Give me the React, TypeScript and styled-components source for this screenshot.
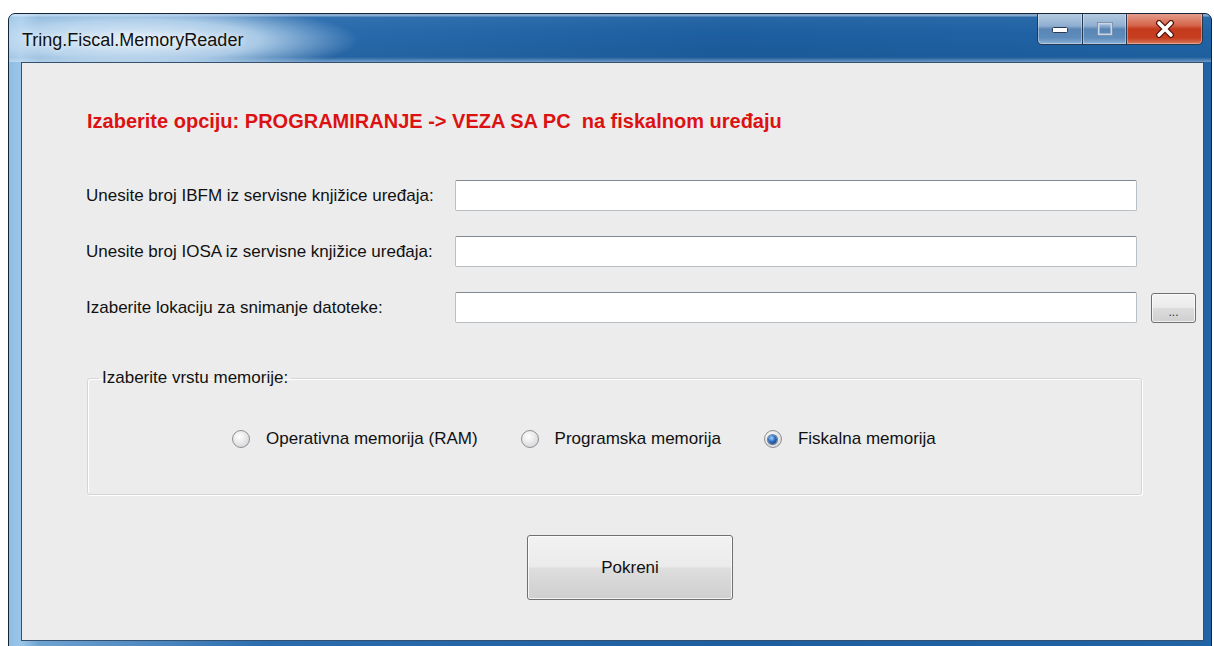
import styled, { createGlobalStyle } from 'styled-components';

const GlobalStyle = createGlobalStyle`
  html, body {
    margin: 0;
    padding: 0;
    background: #ffffff;
    overflow: hidden;
  }
  body {
    font-family: "Liberation Sans", Arial, sans-serif;
  }
`;

const Screen = styled.div`
  width: 1214px;
  height: 646px;
  padding: 13px 2px 0 8px;
  box-sizing: border-box;
  overflow: hidden;
`;

const Window = styled.div`
  height: 634px;
  border: 1px solid #16243a;
  border-radius: 7px 7px 0 0;
  background: linear-gradient(
    90deg,
    #8ebde3 0,
    #9cc6e8 12px,
    #6ea2d0 30px,
    #2a6cae 260px,
    #1d5ea0 60%,
    #2064a6 100%
  );
  display: flex;
  flex-direction: column;
  overflow: hidden;
`;

const TitleBar = styled.div`
  height: 48px;
  flex-shrink: 0;
  display: flex;
  justify-content: space-between;
  align-items: flex-start;
  background:
    radial-gradient(ellipse 220px 36px at 130px 26px, rgba(232, 242, 251, 0.97), rgba(200, 224, 244, 0.8) 55%, rgba(150, 190, 228, 0) 100%),
    linear-gradient(180deg, rgba(255, 255, 255, 0.45) 0, rgba(255, 255, 255, 0.45) 2px, rgba(255, 255, 255, 0.05) 3px, rgba(255, 255, 255, 0) 40%, rgba(0, 0, 0, 0.05) 90%, rgba(255, 255, 255, 0.35) 100%);
`;

const Title = styled.div`
  margin: 15px 0 0 13px;
  font-size: 18px;
  line-height: 22px;
  color: #111;
  text-shadow: 0 0 6px rgba(255, 255, 255, 0.9);
`;

const Caption = styled.div`
  display: flex;
  margin-right: 8px;
  margin-top: -1px;
`;

const CaptionButton = styled.div<{ $w: number; $kind: 'min' | 'max' | 'close' }>`
  width: ${(p) => p.$w}px;
  height: 32px;
  box-sizing: border-box;
  border: 1px solid #27384f;
  border-top: none;
  border-left-width: ${(p) => (p.$kind === 'min' ? 1 : 0)}px;
  border-radius: ${(p) =>
    p.$kind === 'min' ? '0 0 0 5px' : p.$kind === 'close' ? '0 0 5px 0' : '0'};
  display: flex;
  align-items: center;
  justify-content: center;
  box-shadow: inset 0 0 0 1px rgba(255, 255, 255, 0.35);
  background: ${(p) =>
    p.$kind === 'close'
      ? 'linear-gradient(180deg, #e6a190 0%, #d4644a 40%, #c33a1c 52%, #c63d20 80%, #d8775a 100%)'
      : 'linear-gradient(180deg, #b8cde2 0%, #8eaed0 42%, #5a86b4 52%, #5e8cbb 80%, #8db1d6 100%)'};
`;

const Client = styled.div`
  flex: 1;
  margin: 0 7px 7px 12px;
  border: 1px solid #33506f;
  background: #ececec;
  display: flex;
  flex-direction: column;
  align-items: flex-start;
`;

const Notice = styled.div`
  margin: 47px 0 0 65px;
  font-size: 20px;
  line-height: 22px;
  font-weight: bold;
  color: #dc1212;
  white-space: pre;
`;

const Form = styled.div`
  margin: 48px 0 0 64px;
  display: grid;
  grid-template-columns: 355px 682px 45px;
  column-gap: 14px;
  row-gap: 25px;
  align-items: center;
`;

const Label = styled.div`
  font-size: 17px;
  line-height: 20px;
  color: #111;
`;

const TextBox = styled.div`
  height: 31px;
  box-sizing: border-box;
  background: #ffffff;
  border: 1px solid #b7bec4;
  border-top-color: #7f8a91;
  border-radius: 2px;
`;

const SmallButton = styled.div`
  height: 30px;
  box-sizing: border-box;
  border: 1px solid #6f6f6f;
  border-radius: 3px;
  background: linear-gradient(180deg, #f3f3f3 0%, #ebebeb 48%, #dcdcdc 52%, #cfcfcf 100%);
  box-shadow: inset 0 0 0 1px rgba(255, 255, 255, 0.7);
  display: flex;
  align-items: flex-end;
  justify-content: center;
  padding-bottom: 4px;
  font-size: 12px;
  line-height: 12px;
  color: #333;
`;

const Group = styled.fieldset`
  margin: 44px 0 0 65px;
  width: 1055px;
  height: 128px;
  box-sizing: border-box;
  border: 1px solid #d3d6d9;
  border-radius: 3px;
  box-shadow: inset 1px 1px 0 #ffffff, 1px 1px 0 #ffffff;
  padding: 39px 0 0 0;
`;

const Legend = styled.legend`
  margin-left: 11px;
  padding: 0 3px;
  font-size: 17px;
  line-height: 22px;
  color: #111;
`;

const RadioRow = styled.div`
  margin-left: 144px;
  display: flex;
  align-items: center;
  gap: 43px;
`;

const RadioItem = styled.label`
  display: flex;
  align-items: center;
  gap: 16px;
  font-size: 17px;
  line-height: 22px;
  color: #111;
`;

const RadioMark = styled.span<{ $checked?: boolean }>`
  width: 18px;
  height: 18px;
  box-sizing: border-box;
  border-radius: 50%;
  border: 1px solid #8d9196;
  background: radial-gradient(circle at 40% 35%, #ffffff 0%, #e9e9e9 45%, #c9cbcd 100%);
  display: flex;
  align-items: center;
  justify-content: center;

  &::after {
    content: '';
    display: ${(p) => (p.$checked ? 'block' : 'none')};
    width: 9px;
    height: 9px;
    border-radius: 50%;
    background: radial-gradient(circle at 40% 35%, #a8d4ff 0%, #2a6cc0 45%, #0b2f62 100%);
    box-shadow: 0 0 0 1px rgba(20, 50, 90, 0.6);
  }
`;

const StartButton = styled.div`
  margin: 40px 0 0 505px;
  width: 206px;
  height: 65px;
  box-sizing: border-box;
  border: 1px solid #707070;
  border-radius: 3px;
  background: linear-gradient(180deg, #f2f2f2 0%, #ebebeb 48%, #dddddd 52%, #cfcfcf 100%);
  box-shadow: inset 0 0 0 1px rgba(255, 255, 255, 0.75);
  display: flex;
  align-items: center;
  justify-content: center;
  font-size: 17px;
  color: #111;
`;

const fields = [
  'Unesite broj IBFM iz servisne knjižice uređaja:',
  'Unesite broj IOSA iz servisne knjižice uređaja:',
  'Izaberite lokaciju za snimanje datoteke:',
];

const memories = [
  { label: 'Operativna memorija (RAM)', checked: false },
  { label: 'Programska memorija', checked: false },
  { label: 'Fiskalna memorija', checked: true },
];

export default function App() {
  return (
    <>
      <GlobalStyle />
      <Screen>
        <Window>
          <TitleBar>
            <Title>Tring.Fiscal.MemoryReader</Title>
            <Caption>
              <CaptionButton $w={46} $kind="min">
                <svg width="18" height="10" viewBox="0 0 18 10">
                  <rect x="1.5" y="3.5" width="15" height="5" rx="1" fill="#fff" stroke="#2a3a52" />
                </svg>
              </CaptionButton>
              <CaptionButton $w={44} $kind="max">
                <svg width="16" height="14" viewBox="0 0 16 14">
                  <rect x="1.5" y="1.5" width="13" height="11" fill="none" stroke="#c9d6e4" strokeWidth="2" />
                  <rect x="0.5" y="0.5" width="15" height="13" fill="none" stroke="#6f8aa8" strokeWidth="0.8" />
                </svg>
              </CaptionButton>
              <CaptionButton $w={76} $kind="close">
                <svg width="22" height="18" viewBox="0 0 22 18">
                  <path d="M5 3 L17 15 M17 3 L5 15" stroke="#4a1208" strokeWidth="6" strokeLinecap="round" />
                  <path d="M5 3 L17 15 M17 3 L5 15" stroke="#ffffff" strokeWidth="3.6" strokeLinecap="round" />
                </svg>
              </CaptionButton>
            </Caption>
          </TitleBar>
          <Client>
            <Notice>{'Izaberite opciju: PROGRAMIRANJE -> VEZA SA PC  na fiskalnom uređaju'}</Notice>
            <Form>
              {fields.map((f, i) => [
                <Label key={`l${i}`}>{f}</Label>,
                <TextBox key={`t${i}`} />,
                i === 2 ? <SmallButton key="b">...</SmallButton> : <span key={`s${i}`} />,
              ])}
            </Form>
            <Group>
              <Legend>Izaberite vrstu memorije:</Legend>
              <RadioRow>
                {memories.map((m) => (
                  <RadioItem key={m.label}>
                    <RadioMark $checked={m.checked} />
                    {m.label}
                  </RadioItem>
                ))}
              </RadioRow>
            </Group>
            <StartButton>Pokreni</StartButton>
          </Client>
        </Window>
      </Screen>
    </>
  );
}
